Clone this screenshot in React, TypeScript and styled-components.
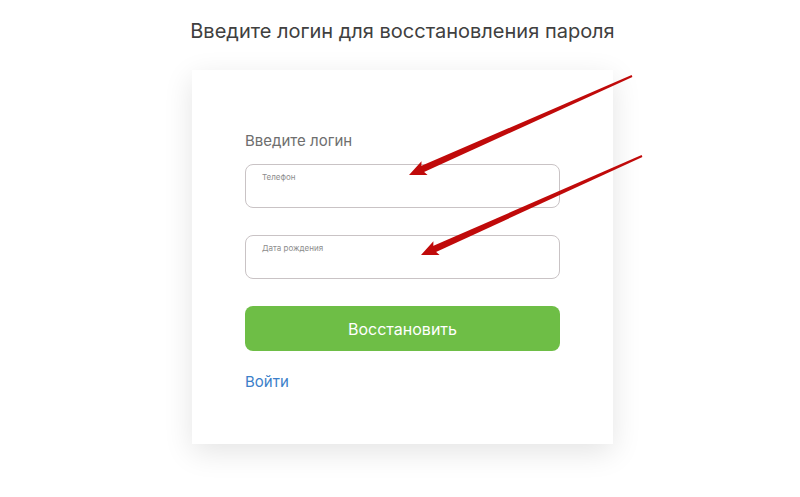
import React from 'react';
import styled, { createGlobalStyle } from 'styled-components';

const GlobalStyle = createGlobalStyle`
  html, body {
    margin: 0;
    padding: 0;
    background: #ffffff;
  }
  body {
    font-family: Inter, 'Noto Sans', 'Liberation Sans', sans-serif;
    -webkit-font-smoothing: antialiased;
  }
  * {
    box-sizing: border-box;
  }
`;

//
// Styled Components

const Page = styled.div`
  position: relative;
  width: 800px;
  height: 497px;
  overflow: hidden;
  display: flex;
  flex-direction: column;
  align-items: center;
  padding: 19px 0 0 5px;
`;

const Title = styled.h1`
  margin: 0 0 27px;
  font-size: 20px;
  line-height: 24px;
  font-weight: 400;
  color: #404040;
`;

const Card = styled.div`
  width: 421px;
  padding: 62px 53px 53px;
  background: #ffffff;
  box-shadow: 0 8px 28px rgba(0, 0, 0, 0.11);
  display: flex;
  flex-direction: column;
`;

const FormLabel = styled.div`
  font-size: 15px;
  line-height: 18px;
  color: #6e6e6e;
  margin-bottom: 14px;
`;

const Field = styled.label`
  display: flex;
  flex-direction: column;
  height: 44px;
  padding: 7px 16px 0;
  border: 1px solid #c9c3c5;
  border-radius: 8px;
  margin-bottom: 27px;
`;

const FieldCaption = styled.span`
  font-size: 8px;
  line-height: 10px;
  color: #8d8d8d;
`;

const FieldInput = styled.input`
  border: none;
  outline: none;
  padding: 0;
  background: transparent;
  font: inherit;
  font-size: 14px;
  height: 20px;
`;

const SubmitButton = styled.button`
  height: 45px;
  border: none;
  border-radius: 8px;
  background: #6ebe46;
  color: #ffffff;
  font-family: inherit;
  font-size: 16px;
  cursor: pointer;
`;

const LoginLink = styled.a`
  margin-top: 22px;
  align-self: flex-start;
  font-size: 15px;
  line-height: 18px;
  color: #3c7fc9;
  text-decoration: none;
`;

const Overlay = styled.svg`
  position: absolute;
  left: 0;
  top: 0;
  pointer-events: none;
`;

type Point = [number, number];

// red annotation arrow, tapered shaft and a solid head
const Arrow: React.FC<{ from: Point; to: Point }> = ({ from, to }) => {
  const dx = to[0] - from[0];
  const dy = to[1] - from[1];
  const len = Math.hypot(dx, dy);
  const ux = dx / len;
  const uy = dy / len;
  const nx = -uy;
  const ny = ux;
  const headLen = 17;
  const headHalf = 7.5;
  const bx = to[0] - ux * headLen;
  const by = to[1] - uy * headLen;
  const sx = to[0] - ux * (headLen - 5);
  const sy = to[1] - uy * (headLen - 5);
  const p = (x: number, y: number) => `${x.toFixed(1)},${y.toFixed(1)}`;
  const shaft = [
    p(from[0] + nx * 1.1, from[1] + ny * 1.1),
    p(sx + nx * 3.4, sy + ny * 3.4),
    p(sx - nx * 3.4, sy - ny * 3.4),
    p(from[0] - nx * 1.1, from[1] - ny * 1.1),
  ].join(' ');
  const head = [
    p(to[0], to[1]),
    p(bx + nx * headHalf, by + ny * headHalf),
    p(bx + ux * 3.5, by + uy * 3.5),
    p(bx - nx * headHalf, by - ny * headHalf),
  ].join(' ');
  return (
    <g fill="#c00a0a">
      <polygon points={shaft} />
      <polygon points={head} />
    </g>
  );
};

//
// Main Component

export default function App(): JSX.Element {
  return (
    <>
      <GlobalStyle />
      <Page>
        <Title>Введите логин для восстановления пароля</Title>
        <Card>
          <FormLabel>Введите логин</FormLabel>
          <Field>
            <FieldCaption>Телефон</FieldCaption>
            <FieldInput type="tel" />
          </Field>
          <Field>
            <FieldCaption>Дата рождения</FieldCaption>
            <FieldInput type="text" />
          </Field>
          <SubmitButton type="button">Восстановить</SubmitButton>
          <LoginLink href="#">Войти</LoginLink>
        </Card>
        <Overlay width="800" height="497" viewBox="0 0 800 497">
          <Arrow from={[632, 76]} to={[409, 175]} />
          <Arrow from={[642, 156]} to={[421, 255]} />
        </Overlay>
      </Page>
    </>
  );
}
